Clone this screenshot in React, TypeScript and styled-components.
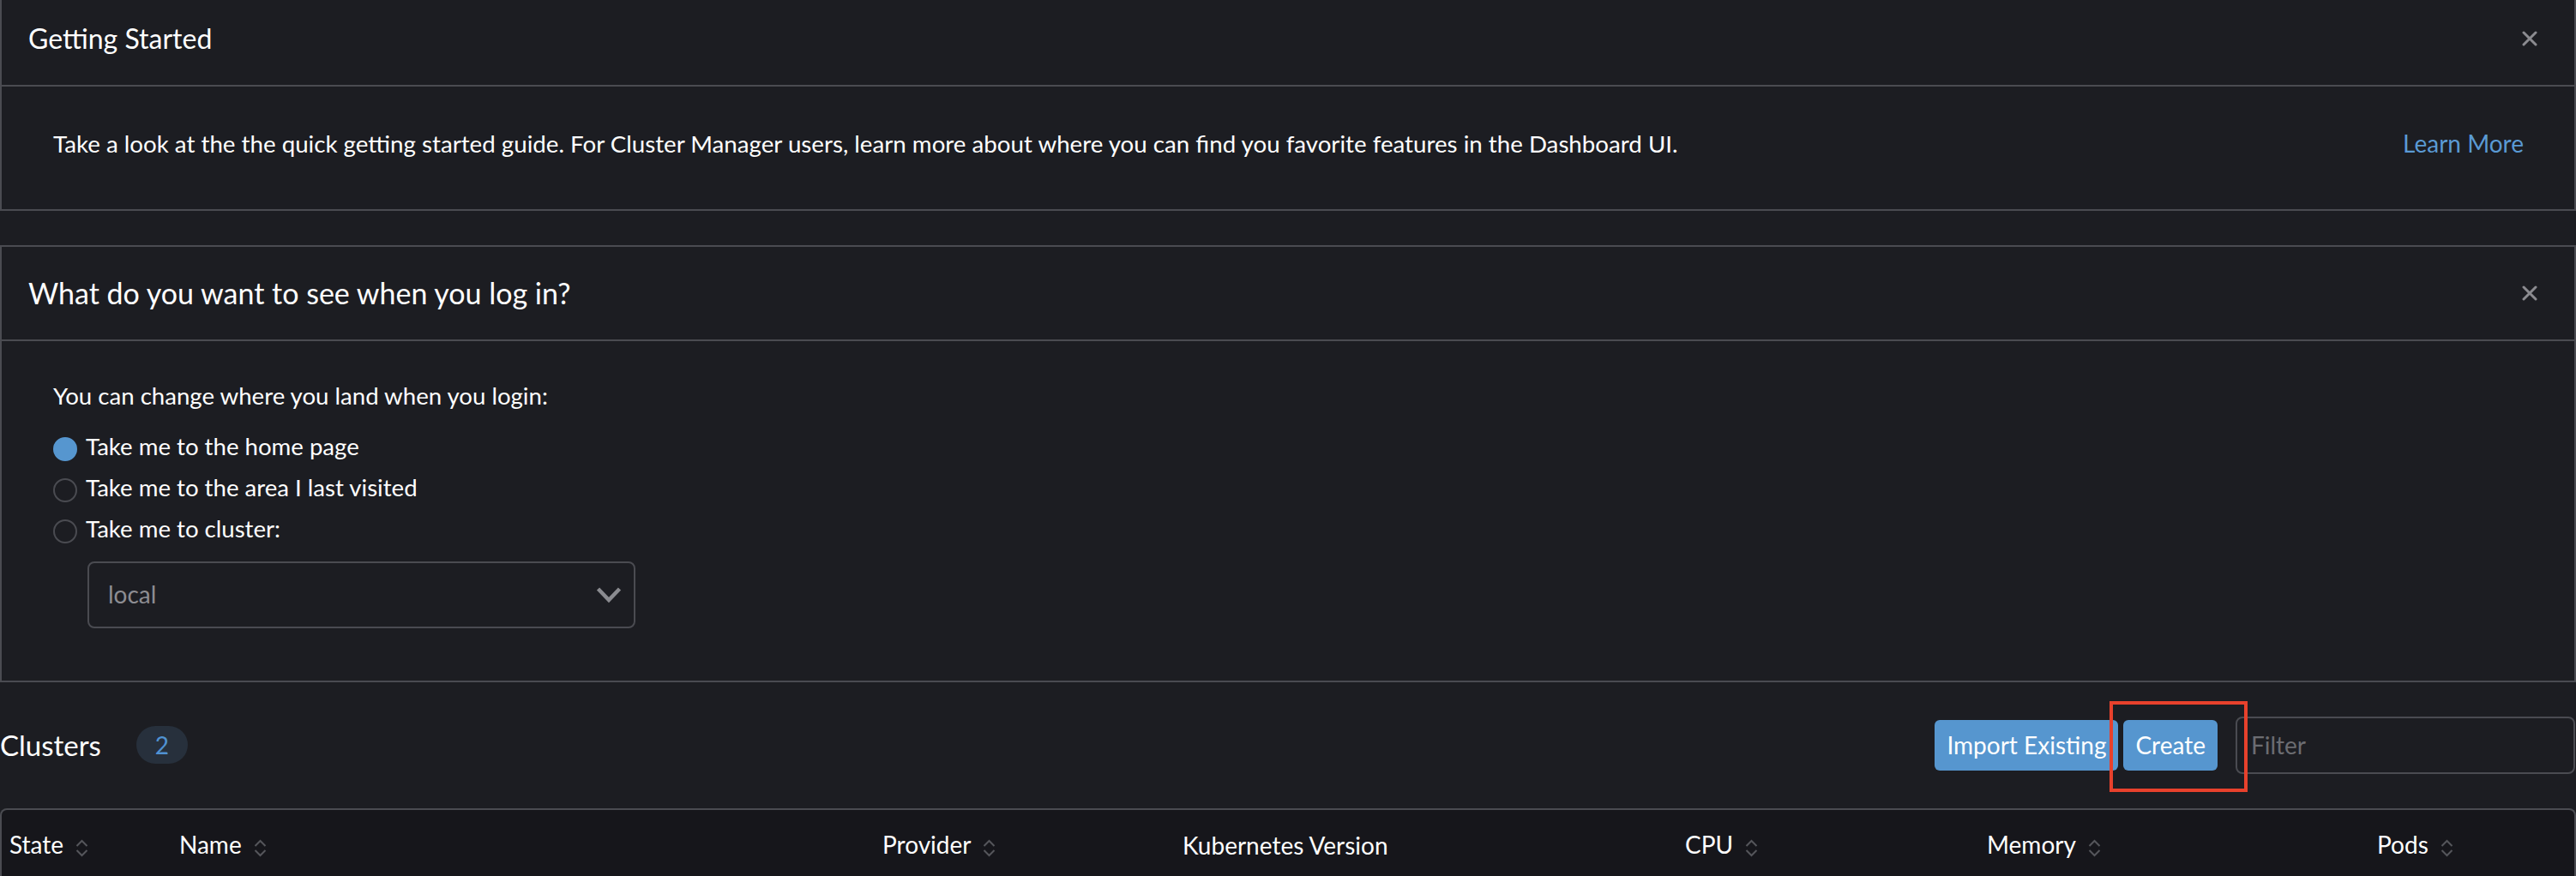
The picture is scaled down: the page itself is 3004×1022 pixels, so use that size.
import React from "react";
import styled, { createGlobalStyle } from "styled-components";

const GlobalStyle = createGlobalStyle`
  html, body {
    margin: 0;
    padding: 0;
    background: #1c1d22;
    color: #ffffff;
    font-family: Lato, "Open Sans", "Liberation Sans", sans-serif;
    overflow: hidden;
  }
  * { box-sizing: border-box; }
`;

const Page = styled.div`
  width: 3004px;
  margin-top: -11px;
  display: flex;
  flex-direction: column;
`;

const Panel = styled.section<{ $gap?: number }>`
  border: 2px solid #4a4b51;
  background: #1c1d22;
  margin-top: ${(p) => p.$gap ?? 0}px;
`;

const PanelHeader = styled.header`
  height: 110px;
  display: flex;
  align-items: center;
  justify-content: space-between;
  padding: 0 43px 0 31px;
  border-bottom: 2px solid #4a4b51;
`;

const PanelTitle = styled.h2<{ $size: number }>`
  margin: 0;
  font-size: ${(p) => p.$size}px;
  font-weight: 400;
  line-height: 40px;
  color: #ffffff;
`;

const CloseButton = styled.button`
  width: 18px;
  height: 18px;
  padding: 0;
  border: 0;
  background: transparent;
  display: flex;
  align-items: center;
  justify-content: center;
  cursor: pointer;
`;

const GuideBody = styled.div`
  display: flex;
  justify-content: space-between;
  align-items: flex-start;
  padding: 50px 59px 59px 60px;
  font-size: 27.7px;
  line-height: 33.6px;
`;

const GuideText = styled.p`
  margin: 0;
  color: #ffffff;
`;

const LearnMore = styled.a`
  color: #5a9ad4;
  font-size: 28px;
  text-decoration: none;
`;

const LandingBody = styled.div`
  display: flex;
  flex-direction: column;
  align-items: flex-start;
  padding: 40px 60px 61px 60px;
  font-size: 27.6px;
  line-height: 48px;
`;

const Intro = styled.p`
  margin: 0 0 11px 0;
`;

const RadioRow = styled.label`
  height: 48px;
  display: flex;
  align-items: center;
  gap: 10px;
  cursor: pointer;
`;

const RadioDot = styled.span<{ $checked?: boolean }>`
  width: 28px;
  height: 28px;
  margin-top: 6px;
  border-radius: 50%;
  flex: none;
  background: ${(p) => (p.$checked ? "#5696cf" : "transparent")};
  border: 2px solid ${(p) => (p.$checked ? "#5696cf" : "#4a4b51")};
`;

const Select = styled.div`
  margin: 14px 0 0 40px;
  width: 639px;
  height: 78px;
  border: 2px solid #4a4b51;
  border-radius: 8px;
  display: flex;
  align-items: center;
  justify-content: space-between;
  padding: 0 14px 0 22px;
  color: #8d8d92;
  font-size: 28px;
  line-height: 33.6px;
`;

const ClustersBar = styled.div`
  margin-top: 40px;
  height: 67px;
  display: flex;
  align-items: center;
  justify-content: space-between;
  padding-right: 1px;
`;

const TitleGroup = styled.div`
  display: flex;
  align-items: center;
`;

const SectionTitle = styled.h1`
  margin: 0;
  font-size: 33px;
  font-weight: 400;
  line-height: 40px;
`;

const CountBadge = styled.span`
  margin-left: 41px;
  width: 60px;
  height: 44px;
  border-radius: 22px;
  background: #27303c;
  color: #5092d2;
  font-size: 28px;
  display: flex;
  align-items: center;
  justify-content: center;
`;

const Actions = styled.div`
  display: flex;
  align-items: center;
`;

const PrimaryButton = styled.button<{ $gapRight: number }>`
  height: 59px;
  padding: 0 14px;
  margin-right: ${(p) => p.$gapRight}px;
  border: 0;
  border-radius: 6px;
  background: #5696cf;
  color: #ffffff;
  font-family: Lato, "Liberation Sans", sans-serif;
  font-size: 28px;
  white-space: nowrap;
  cursor: pointer;
`;

const Highlight = styled.span`
  position: relative;
  display: inline-flex;
  margin-right: 21px;
`;

const Annotation = styled.span`
  position: absolute;
  top: -22px;
  left: -16px;
  width: 161px;
  height: 106px;
  border: 4px solid #e8412c;
  pointer-events: none;
`;

const FilterInput = styled.input`
  width: 396px;
  height: 67px;
  border: 2px solid #4a4b51;
  border-radius: 8px;
  background: transparent;
  padding: 0 16px;
  color: #ffffff;
  font-family: Lato, "Liberation Sans", sans-serif;
  font-size: 28px;
  outline: none;
  &::placeholder {
    color: #6b6c71;
  }
`;

const Table = styled.div`
  margin-top: 40px;
  border: 2px solid #4a4b51;
  border-bottom: 0;
  border-radius: 8px 8px 0 0;
  background: #16161b;
  height: 120px;
`;

const HeaderRow = styled.div`
  display: grid;
  grid-template-columns: 198px 820px 350px 586px 352px 455px 1fr;
  padding-top: 23px;
`;

const HeaderCell = styled.div<{ $drop?: number }>`
  display: flex;
  align-items: center;
  gap: 14px;
  padding-left: 9px;
  margin-top: ${(p) => p.$drop ?? 0}px;
  font-size: 28px;
  line-height: 33.6px;
  color: #ffffff;
`;

const SortIcon = styled.svg`
  flex: none;
  margin-top: 9px;
`;

const Close = () => (
  <CloseButton aria-label="close">
    <svg width="18" height="18" viewBox="0 0 18 18">
      <path d="M2 2 L16 16 M16 2 L2 16" stroke="#8b8b90" strokeWidth="3" strokeLinecap="round" />
    </svg>
  </CloseButton>
);

const Sort = () => (
  <SortIcon width="15" height="21" viewBox="0 0 15 21">
    <path d="M1.5 8 L7.5 2 L13.5 8 M1.5 13 L7.5 19 L13.5 13" fill="none" stroke="#55565b" strokeWidth="2" />
  </SortIcon>
);

const columns: { label: string; sortable: boolean; drop?: number }[] = [
  { label: "State", sortable: true },
  { label: "Name", sortable: true },
  { label: "Provider", sortable: true },
  { label: "Kubernetes Version", sortable: false, drop: 2 },
  { label: "CPU", sortable: true },
  { label: "Memory", sortable: true },
  { label: "Pods", sortable: true },
];

const radios = [
  { label: "Take me to the home page", checked: true },
  { label: "Take me to the area I last visited", checked: false },
  { label: "Take me to cluster:", checked: false },
];

export default function App() {
  return (
    <>
      <GlobalStyle />
      <Page>
        <Panel>
          <PanelHeader>
            <PanelTitle $size={32}>Getting Started</PanelTitle>
            <Close />
          </PanelHeader>
          <GuideBody>
            <GuideText>
              Take a look at the the quick getting started guide. For Cluster Manager users, learn more about where you can find you favorite features in the Dashboard UI.
            </GuideText>
            <LearnMore href="#">Learn More</LearnMore>
          </GuideBody>
        </Panel>

        <Panel $gap={40}>
          <PanelHeader>
            <PanelTitle $size={34}>What do you want to see when you log in?</PanelTitle>
            <Close />
          </PanelHeader>
          <LandingBody>
            <Intro>You can change where you land when you login:</Intro>
            {radios.map((r) => (
              <RadioRow key={r.label}>
                <RadioDot $checked={r.checked} />
                {r.label}
              </RadioRow>
            ))}
            <Select>
              <span>local</span>
              <svg width="30" height="20" viewBox="0 0 30 20">
                <path d="M2.5 3 L15 16 L27.5 3" fill="none" stroke="#8a8b90" strokeWidth="4.5" />
              </svg>
            </Select>
          </LandingBody>
        </Panel>

        <ClustersBar>
          <TitleGroup>
            <SectionTitle>Clusters</SectionTitle>
            <CountBadge>2</CountBadge>
          </TitleGroup>
          <Actions>
            <PrimaryButton $gapRight={6}>Import Existing</PrimaryButton>
            <Highlight>
              <PrimaryButton $gapRight={0}>Create</PrimaryButton>
              <Annotation />
            </Highlight>
            <FilterInput placeholder="Filter" />
          </Actions>
        </ClustersBar>

        <Table>
          <HeaderRow>
            {columns.map((c) => (
              <HeaderCell key={c.label} $drop={c.drop}>
                {c.label}
                {c.sortable && <Sort />}
              </HeaderCell>
            ))}
          </HeaderRow>
        </Table>
      </Page>
    </>
  );
}
